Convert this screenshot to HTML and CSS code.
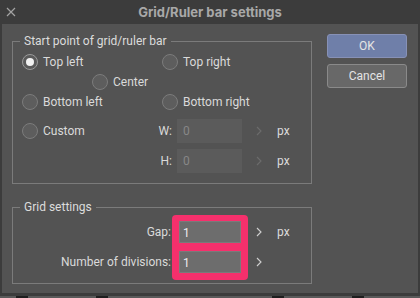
FILE: index.html
```html
<!DOCTYPE html>
<html lang="en">
<head>
  <meta charset="UTF-8">
  <title>Grid/Ruler bar settings</title>
  <link rel="stylesheet" href="styles.css">
</head>
<body>
  <div class="window">
    <div class="titlebar">
      <svg class="close" width="10" height="10" viewBox="0 0 10 10">
        <path d="M1 1 L9 9 M9 1 L1 9" stroke="#a3a3a3" stroke-width="1.2" fill="none"/>
      </svg>
      <span class="title">Grid/Ruler bar settings</span>
    </div>

    <div class="panel">
      <div class="groups">
        <!-- Start point -->
        <fieldset class="group group-start">
          <legend>Start point of grid/ruler bar</legend>
          <div class="radio-row">
            <label class="radio col-a checked"><span class="dot"></span>Top left</label>
            <label class="radio"><span class="dot"></span>Top right</label>
          </div>
          <div class="radio-row row-center">
            <label class="radio"><span class="dot"></span>Center</label>
          </div>
          <div class="radio-row">
            <label class="radio col-a"><span class="dot"></span>Bottom left</label>
            <label class="radio"><span class="dot"></span>Bottom right</label>
          </div>
          <div class="field-row row-w">
            <label class="radio col-b"><span class="dot"></span>Custom</label>
            <span class="field-label">W:</span>
            <span class="input disabled">0</span>
            <svg class="chevron off" width="6" height="10" viewBox="0 0 6 10"><path d="M1 1 L5 5 L1 9" fill="none" stroke-width="1.1"/></svg>
            <span class="unit">px</span>
          </div>
          <div class="field-row row-h">
            <span class="col-b"></span>
            <span class="field-label">H:</span>
            <span class="input disabled">0</span>
            <svg class="chevron off" width="6" height="10" viewBox="0 0 6 10"><path d="M1 1 L5 5 L1 9" fill="none" stroke-width="1.1"/></svg>
            <span class="unit">px</span>
          </div>
        </fieldset>

        <!-- Grid settings -->
        <fieldset class="group group-grid">
          <legend>Grid settings</legend>
          <div class="grid-fields">
            <div class="stack labels">
              <span>Gap:</span>
              <span>Number of divisions:</span>
            </div>
            <div class="stack highlight">
              <span class="input">1</span>
              <span class="input">1</span>
            </div>
            <div class="stack extras">
              <span class="extra">
                <svg class="chevron" width="6" height="10" viewBox="0 0 6 10"><path d="M1 1 L5 5 L1 9" fill="none" stroke-width="1.1"/></svg>
                <span class="unit">px</span>
              </span>
              <span class="extra">
                <svg class="chevron" width="6" height="10" viewBox="0 0 6 10"><path d="M1 1 L5 5 L1 9" fill="none" stroke-width="1.1"/></svg>
              </span>
            </div>
          </div>
        </fieldset>
      </div>

      <div class="buttons">
        <button class="btn primary">OK</button>
        <button class="btn">Cancel</button>
      </div>
    </div>

    <div class="footer">
      <span class="mark m1"></span>
      <span class="mark m2"></span>
      <span class="mark m3"></span>
      <span class="mark m4"></span>
    </div>
  </div>
</body>
</html>
```

FILE: styles.css
```css
/* Reset */
* {
    margin: 0;
    padding: 0;
    box-sizing: border-box;
}

body {
    background: #3c3c3c;
    font-family: 'Roboto', 'Liberation Sans', sans-serif;
    font-size: 12px;
    color: #dadada;
    width: 420px;
    height: 298px;
    overflow: hidden;
}

/* Title bar */
.titlebar {
    height: 24px;
    display: flex;
    align-items: center;
    background: #3c3c3c;
}

.close {
    margin-left: 6px;
}

.title {
    flex: 1;
    text-align: center;
    margin-right: 16px;
    font-family: 'Inter', 'Liberation Sans', sans-serif;
    font-size: 13px;
    font-weight: 700;
    color: #a8a8a8;
}

/* Dialog body */
.panel {
    margin: 0 2px;
    height: 269px;
    background: #535353;
    display: flex;
    padding: 10px 11px 0 10px;
}

.groups {
    width: 300px;
}

.group {
    border: 1px solid #7b7b7b;
    min-width: 0;
}

.group legend {
    margin-left: 7px;
    padding: 0 4px;
    line-height: 14px;
    color: #dcdcdc;
}

.group-start {
    padding: 4px 0 10px 0;
}

.group-start > div {
    margin-left: 9px;
}

.group-grid {
    margin-top: 16px;
    padding: 1px 0 3px 0;
}

/* Radio buttons */
.radio-row {
    display: flex;
    height: 20px;
    align-items: center;
}

.group-start > .row-center {
    padding-left: 70px;
}

.radio {
    display: flex;
    align-items: center;
    gap: 5px;
    white-space: nowrap;
}

.col-a {
    width: 140px;
}

.col-b {
    width: 120px;
}

.dot {
    width: 16px;
    height: 16px;
    border-radius: 50%;
    background: #5d5d5d;
    border: 1px solid #7c7c7c;
    flex-shrink: 0;
    display: flex;
    align-items: center;
    justify-content: center;
}

.checked .dot {
    background: #5a5a5a;
    border-color: #9a9a9a;
}

.checked .dot::after {
    content: "";
    width: 8px;
    height: 8px;
    border-radius: 50%;
    background: #f2f2f2;
}

/* W / H fields */
.field-row {
    display: flex;
    align-items: center;
    height: 24px;
}

.row-w {
    margin-top: 7px;
}

.row-h {
    margin-top: 6px;
}

.field-label {
    width: 30px;
    text-align: right;
    margin-right: 5px;
}

.input {
    display: block;
    width: 65px;
    height: 24px;
    line-height: 24px;
    padding-left: 6px;
    background: #5b5b5b;
}

.input.disabled {
    color: #878787;
}

.chevron {
    margin-left: 14px;
    stroke: #d0d0d0;
}

.chevron.off {
    stroke: #6c6c6c;
}

.unit {
    margin-left: 15px;
    color: #dcdcdc;
}

/* Grid settings */
.grid-fields {
    display: flex;
}

.stack {
    display: flex;
    flex-direction: column;
    gap: 8px;
    padding-top: 6px;
}

.stack > * {
    height: 22px;
    line-height: 22px;
}

.labels {
    width: 158px;
    text-align: right;
}

.highlight {
    margin-left: 1px;
    padding: 6px 7px 7px 7px;
    background: #f5306c;
    border-radius: 4px;
}

.highlight .input {
    width: 62px;
    height: 22px;
    line-height: 22px;
    padding-left: 3px;
    background: #6d6d6d;
    border: 1px solid #7a7a7a;
    color: #ececec;
}

.extras .extra {
    display: flex;
    align-items: center;
}

.extras .chevron {
    margin-left: 8px;
}

/* Buttons */
.buttons {
    margin-left: 15px;
    display: flex;
    flex-direction: column;
    gap: 6px;
}

.btn {
    width: 80px;
    height: 24px;
    border-radius: 3px;
    border: 1px solid #8a8a8a;
    background: #686868;
    color: #e4e4e4;
    font-family: inherit;
    font-size: 12px;
}

.btn.primary {
    background: #6f7fa9;
    border-color: #8791b6;
}

/* Bottom edge */
.footer {
    height: 5px;
    border-bottom: 2px solid #5a5a5a;
    position: relative;
}

.mark {
    position: absolute;
    top: 3px;
    width: 12px;
    height: 2px;
    background: #1e1e1e;
}

.m1 { left: 16px; }
.m2 { left: 96px; }
.m3 { left: 272px; }
.m4 { left: 352px; }
```
